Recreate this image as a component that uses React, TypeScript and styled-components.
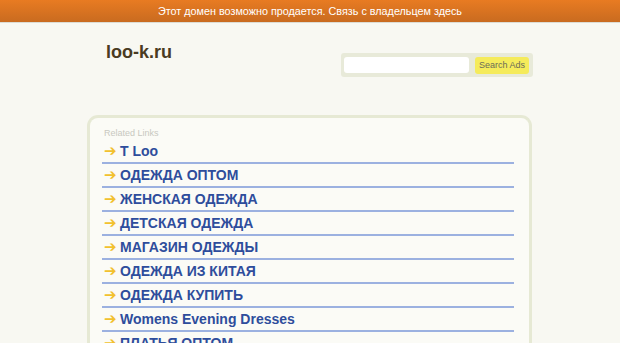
import React from 'react';
import styled, { createGlobalStyle } from 'styled-components';

const GlobalStyle = createGlobalStyle`
  html, body {
    margin: 0;
    padding: 0;
    background: #f8f8f2;
    font-family: "Liberation Sans", Arial, sans-serif;
  }
`;

const TopBar = styled.div`
  height: 22px;
  background: linear-gradient(to bottom, #e87b22, #c96b20);
  border-bottom: 1px solid #dcdcd4;
  color: #fff;
  font-size: 10.8px;
  display: flex;
  align-items: center;
  justify-content: center;
`;

const Header = styled.div`
  display: flex;
  justify-content: space-between;
  align-items: flex-start;
  padding: 0 87px 0 106px;
  height: 92px;
`;

const Logo = styled.h1`
  margin: 19px 0 0;
  font-size: 18px;
  font-weight: bold;
  color: #4a3b22;
`;

const SearchBox = styled.form`
  margin-top: 30px;
  width: 192px;
  height: 24px;
  box-sizing: border-box;
  padding: 3px 4px 3px 3px;
  background: #e8ead9;
  border-radius: 3px;
  display: flex;
  align-items: center;
  justify-content: space-between;
`;

const SearchInput = styled.input`
  width: 125px;
  height: 16px;
  box-sizing: border-box;
  border: none;
  border-radius: 3px;
  background: #fff;
  padding: 0 4px;
  outline: none;
`;

const SearchButton = styled.button`
  height: 17px;
  padding: 0 4px;
  border: none;
  border-radius: 3px;
  background: #f5eb5b;
  color: #6b6b58;
  font-family: "Liberation Sans", Arial, sans-serif;
  font-size: 9px;
  cursor: pointer;
`;

const Panel = styled.div`
  margin: 0 88px 0 87px;
  border: 3px solid #e6e9d4;
  border-bottom: none;
  border-radius: 11px 11px 0 0;
  background: #fbfbf6;
  padding: 10px 15px 0 12px;
  height: 240px;
  overflow: hidden;
`;

const Caption = styled.div`
  font-size: 9px;
  color: #c8c8c0;
  margin: 0 0 2px 2px;
`;

const LinkList = styled.ul`
  list-style: none;
  margin: 0;
  padding: 0;
`;

const LinkRow = styled.li`
  height: 22px;
  border-bottom: 2px solid #9cb1e0;
  display: flex;
  align-items: center;
  padding-left: 2px;
`;

const Arrow = styled.span`
  color: #f2c12e;
  font-family: "DejaVu Sans", sans-serif;
  font-size: 15px;
  line-height: 1;
  width: 16px;
`;

const LinkText = styled.a`
  color: #2e4d9c;
  font-size: 14px;
  font-weight: bold;
  text-decoration: none;
`;

const links = [
  'T Loo',
  'ОДЕЖДА ОПТОМ',
  'ЖЕНСКАЯ ОДЕЖДА',
  'ДЕТСКАЯ ОДЕЖДА',
  'МАГАЗИН ОДЕЖДЫ',
  'ОДЕЖДА ИЗ КИТАЯ',
  'ОДЕЖДА КУПИТЬ',
  'Womens Evening Dresses',
  'ПЛАТЬЯ ОПТОМ',
];

const App = (): JSX.Element => (
  <>
    <GlobalStyle />
    <TopBar>Этот домен возможно продается. Связь с владельцем здесь</TopBar>
    <Header>
      <Logo>loo-k.ru</Logo>
      <SearchBox onSubmit={(e) => e.preventDefault()}>
        <SearchInput type="text" />
        <SearchButton type="submit">Search Ads</SearchButton>
      </SearchBox>
    </Header>
    <Panel>
      <Caption>Related Links</Caption>
      <LinkList>
        {links.map((l) => (
          <LinkRow key={l}>
            <Arrow>➔</Arrow>
            <LinkText href="#">{l}</LinkText>
          </LinkRow>
        ))}
      </LinkList>
    </Panel>
  </>
);

export default App;
